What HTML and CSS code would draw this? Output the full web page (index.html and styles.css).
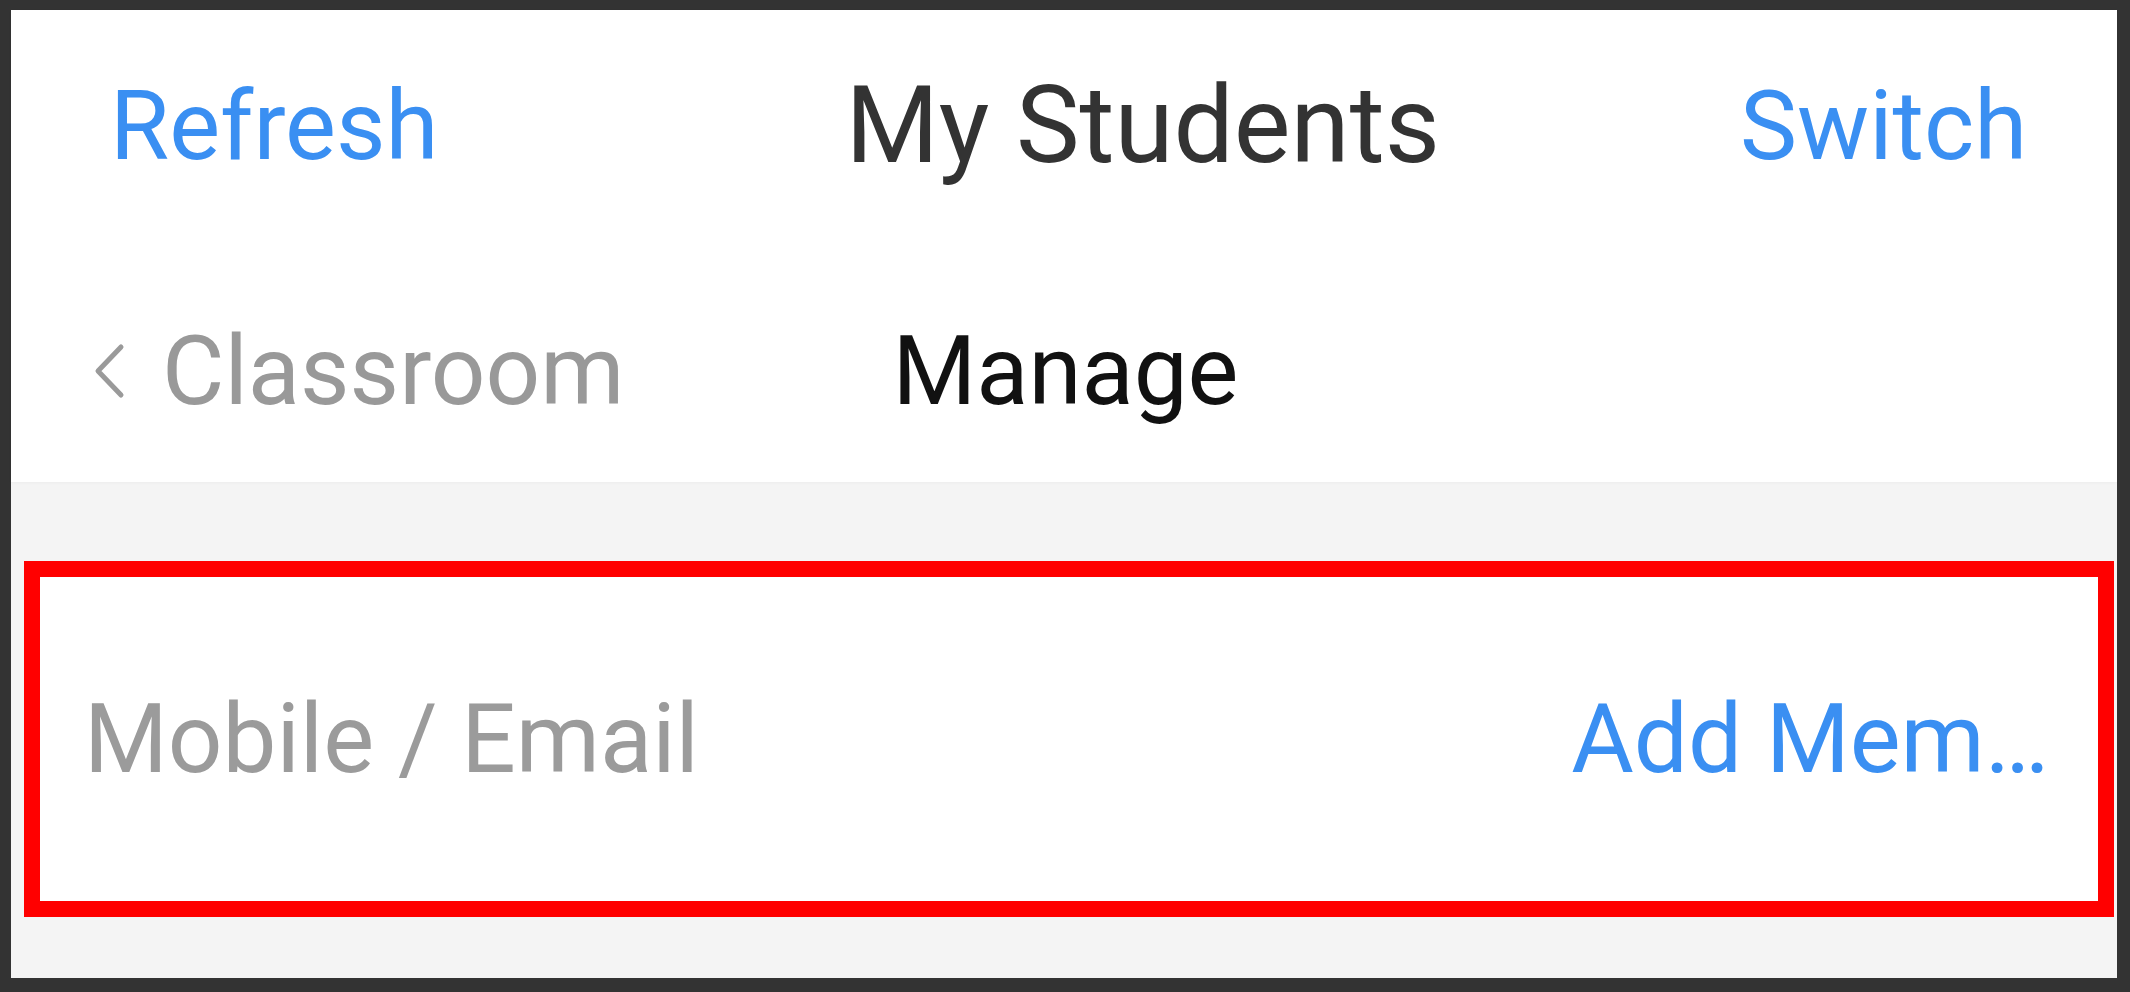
FILE: index.html
```html
<!DOCTYPE html>
<html lang="en">
<head>
<meta charset="utf-8">
<title>My Students</title>
<link rel="stylesheet" href="styles.css">
</head>
<body>
<div class="frame">
  <header class="head">
    <div class="topbar">
      <span class="link refresh">Refresh</span>
      <span class="title">My Students</span>
      <span class="link switch">Switch</span>
    </div>
    <div class="subbar">
      <span class="back">
        <svg class="chev" viewBox="0 0 34 56" width="34" height="56" aria-hidden="true">
          <polyline points="29,4 6,28 29,52" fill="none" stroke="#9a9a9a" stroke-width="5" stroke-linecap="round" stroke-linejoin="round"/>
        </svg>
        <span class="back-label">Classroom</span>
      </span>
      <span class="tab">Manage</span>
    </div>
  </header>
  <main class="body">
    <div class="addbox">
      <span class="placeholder">Mobile / Email</span>
      <span class="link add">Add Mem…</span>
    </div>
  </main>
</div>
</body>
</html>
```
FILE: styles.css
```css
html, body {
  margin: 0;
  padding: 0;
}
body {
  background: #333333;
  width: 2130px;
  height: 992px;
  font-family: Roboto, "Liberation Sans", Arial, sans-serif;
  font-size: 96px;
  overflow: hidden;
}
.frame {
  margin: 10px 13px 0 11px;
  height: 968px;
  display: flex;
  flex-direction: column;
  background: #f4f4f4;
}
.head {
  background: #ffffff;
  padding: 56px 0 51px;
  display: flex;
  flex-direction: column;
  gap: 125px;
  box-shadow: 0 1px 3px rgba(0, 0, 0, 0.03);
}
.topbar, .subbar {
  display: flex;
  align-items: center;
  height: 120px;
  line-height: 120px;
  white-space: nowrap;
}
.topbar {
  padding: 0 90px 0 99px;
}
.link {
  color: #3a8ff2;
}
.title {
  color: #333333;
  font-size: 107px;
  margin-left: 407px;
}
.switch {
  margin-left: auto;
}
.subbar {
  padding-left: 81px;
}
.back {
  display: flex;
  align-items: center;
  color: #999999;
}
.chev {
  display: block;
  margin-right: 36px;
}
.tab {
  color: #111111;
  margin-left: 268px;
}
.body {
  flex: 1;
  padding: 79px 3px 0 13px;
}
.addbox {
  height: 324px;
  border: 16px solid #ff0000;
  background: #ffffff;
  display: flex;
  align-items: center;
  justify-content: space-between;
  padding: 0 49px 0 44px;
  line-height: 120px;
  white-space: nowrap;
}
.placeholder {
  color: #9b9b9b;
}
```
